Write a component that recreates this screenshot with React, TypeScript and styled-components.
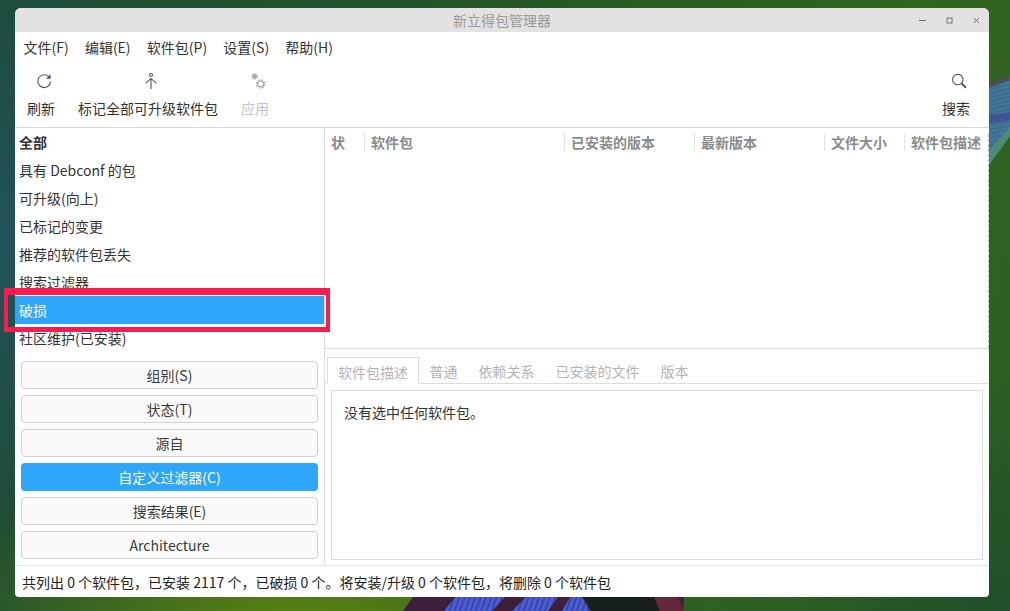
import React from 'react';
import styled, { createGlobalStyle } from 'styled-components';

const FONT = `"Noto Sans CJK SC", "Noto Sans", sans-serif`;

const menus = ['文件(F)', '编辑(E)', '软件包(P)', '设置(S)', '帮助(H)'];
const filters = ['全部', '具有 Debconf 的包', '可升级(向上)', '已标记的变更', '推荐的软件包丢失', '搜索过滤器', '破损', '社区维护(已安装)'];
const groups = ['组别(S)', '状态(T)', '源自', '自定义过滤器(C)', '搜索结果(E)', 'Architecture'];
const columns = [
  { label: '状', width: 40 },
  { label: '软件包', width: 200 },
  { label: '已安装的版本', width: 130 },
  { label: '最新版本', width: 130 },
  { label: '文件大小', width: 80 },
  { label: '软件包描述', width: 84 }
];
const tabs = ['软件包描述', '普通', '依赖关系', '已安装的文件', '版本'];

const GlobalStyle = createGlobalStyle`
  html, body {
    margin: 0;
    width: 1010px;
    height: 611px;
    overflow: hidden;
  }
  * {
    box-sizing: border-box;
  }
`;

const Desktop = styled.div`
  position: relative;
  width: 1010px;
  height: 611px;
  padding: 8px 21px 14px 15px;
  font-family: ${FONT};
  font-size: 14px;
  color: #2e2e2e;
  background:
    radial-gradient(ellipse 240px 300px at 0px 240px, #23525c 0%, rgba(35, 82, 92, 0) 100%),
    radial-gradient(ellipse 380px 200px at 300px 640px, #5d8610 0%, rgba(93, 134, 16, 0) 100%),
    radial-gradient(ellipse 300px 260px at 1010px 611px, #224e2a 0%, rgba(34, 78, 42, 0) 100%),
    linear-gradient(100deg, #1c4a35 0%, #2b5a22 60%, #33651f 82%, #2d5e22 100%);
`;

const Wallpaper = styled.svg`
  position: absolute;
  left: 0;
  top: 0;
`;

const Window = styled.div`
  position: relative;
  display: flex;
  flex-direction: column;
  height: 589px;
  background: #fff;
  border-radius: 6px 6px 4px 4px;
  overflow: hidden;
`;

const TitleBar = styled.div`
  display: grid;
  grid-template-columns: 1fr auto 1fr;
  align-items: center;
  height: 24px;
  flex: none;
  background: #e2e2e2;
  color: #9a9a9a;
`;

const Title = styled.div`
  grid-column: 2;
  line-height: 24px;
`;

const WindowControls = styled.div`
  justify-self: end;
  display: flex;
  align-items: center;
  gap: 20px;
  padding-right: 9px;
  height: 24px;
`;

const MenuBar = styled.div`
  display: flex;
  gap: 16.2px;
  height: 32px;
  flex: none;
  padding: 0 0 2px 8.5px;
  align-items: center;
  color: #333;
`;

const ToolBar = styled.div`
  display: flex;
  gap: 23px;
  height: 64px;
  flex: none;
  padding: 0 19px 0 12px;
  border-bottom: 1px solid #d9d9dd;
`;

const ToolButton = styled.div<{ $disabled?: boolean; $end?: boolean }>`
  display: flex;
  flex-direction: column;
  align-items: center;
  margin-left: ${(p) => (p.$end ? 'auto' : '0')};
  color: ${(p) => (p.$disabled ? '#c4c4c8' : '#333')};
  svg {
    display: block;
    margin: 9px 0 0 5px;
  }
`;

const ToolLabel = styled.span`
  margin-top: 9px;
  line-height: 20px;
`;

const Body = styled.div`
  display: flex;
  height: 437px;
  flex: none;
`;

const Sidebar = styled.div`
  width: 310px;
  flex: none;
  border-right: 1px solid #dcdce0;
  display: flex;
  flex-direction: column;
`;

const FilterList = styled.div`
  height: 233px;
  flex: none;
`;

const FilterRow = styled.div<{ $selected?: boolean; $bold?: boolean }>`
  height: 28px;
  line-height: 28px;
  padding-left: 4px;
  font-weight: ${(p) => (p.$bold ? 700 : 400)};
  background: ${(p) => (p.$selected ? '#2ea6fa' : 'transparent')};
  color: ${(p) => (p.$selected ? '#fff' : '#333')};
`;

const ButtonStack = styled.div`
  display: flex;
  flex-direction: column;
  gap: 6px;
  padding: 0 6px;
`;

const GroupButton = styled.div<{ $active?: boolean }>`
  height: 28px;
  text-align: center;
  border-radius: 4px;
  border: ${(p) => (p.$active ? 'none' : '1px solid #d0d0d0')};
  line-height: ${(p) => (p.$active ? '28px' : '26px')};
  background: ${(p) => (p.$active ? '#2ea6fa' : '#fafafa')};
  color: ${(p) => (p.$active ? '#fff' : '#3a3a3a')};
`;

const Main = styled.div`
  flex: 1;
  min-width: 0;
  display: flex;
  flex-direction: column;
`;

const PackageList = styled.div`
  position: relative;
  height: 221px;
  flex: none;
  border-bottom: 1px solid #dcdce0;
`;

const ColumnHeader = styled.div`
  display: flex;
  height: 30px;
  padding-top: 5px;
`;

const ColumnCell = styled.div<{ $width: number }>`
  width: ${(p) => p.$width}px;
  flex: none;
  height: 18px;
  line-height: 18px;
  padding-left: 6px;
  font-weight: 700;
  color: #8b8b8b;
  white-space: nowrap;
  border-right: 1px solid #e2e2e2;
  &:last-child {
    border-right: none;
  }
`;

const DashedEdge = styled.div`
  position: absolute;
  right: 0;
  top: 6px;
  bottom: 0;
  border-right: 1px dashed #bdbdbd;
`;

const DetailPane = styled.div`
  flex: 1;
  display: flex;
  flex-direction: column;
  padding-top: 8px;
`;

const TabStrip = styled.div`
  display: flex;
  height: 27px;
  flex: none;
  padding-left: 2px;
  border-bottom: 1px solid #dcdce0;
`;

const Tab = styled.div<{ $active?: boolean }>`
  height: ${(p) => (p.$active ? '27px' : '26px')};
  padding: 0 ${(p) => (p.$active ? '10px' : '10.5px')};
  color: #b4b4b8;
  background: #fff;
  border: ${(p) => (p.$active ? '1px solid #dcdce0' : 'none')};
  border-bottom: ${(p) => (p.$active ? '1px solid #fff' : 'none')};
  line-height: ${(p) => (p.$active ? '28px' : '29px')};
`;

const TabPanel = styled.div`
  height: 170px;
  margin: 6px 6px 0;
  padding: 10px 12px;
  border: 1px solid #dcdce0;
  line-height: 22px;
  color: #333;
`;

const StatusBar = styled.div`
  height: 32px;
  flex: none;
  border-top: 1px solid #e2e2e2;
  padding-left: 7px;
  line-height: 32px;
  color: #222;
  white-space: nowrap;
`;

const Highlight = styled.div`
  position: absolute;
  left: 4px;
  top: 288px;
  width: 326px;
  height: 44px;
  border: solid #fb1c4f;
  border-width: 7px 4px 5px 4px;
  pointer-events: none;
`;

const RefreshIcon = () => (
  <svg width="16" height="16" viewBox="0 0 16 16" fill="none" stroke="#4d5566" strokeWidth="1.1">
    <path d="M13.4 4.4A6.4 6.4 0 1 0 14.6 8.6" />
    <path d="M14.6 1.2v4.6H10z" fill="#4d5566" stroke="none" />
  </svg>
);

const MarkIcon = () => (
  <svg width="16" height="16" viewBox="0 0 16 16" fill="none" stroke="#4d5566" strokeWidth="1.1">
    <circle cx="8" cy="2" r="1.5" />
    <path d="M8 5.4V16M2.6 10.4L8 5.4l5.4 5" />
  </svg>
);

const ApplyIcon = () => (
  <svg width="16" height="16" viewBox="0 0 16 16" fill="none" stroke="#a4a7ad">
    <circle cx="4.6" cy="3.4" r="2.4" fill="#a4a7ad" stroke="none" />
    <circle cx="4.6" cy="3.4" r="2.9" strokeWidth="1" strokeDasharray="1.3 1" />
    <circle cx="10.6" cy="11" r="3" strokeWidth="1.2" />
    <circle cx="10.6" cy="11" r="4.2" strokeWidth="1.2" strokeDasharray="1.7 1.6" />
  </svg>
);

const SearchIcon = () => (
  <svg width="16" height="16" viewBox="0 0 16 16" fill="none" stroke="#4d5566" strokeWidth="1.1">
    <circle cx="6.8" cy="6.6" r="5.2" />
    <path d="M10.6 10.4l4.4 4.4" strokeWidth="2" />
  </svg>
);

const MinIcon = () => (
  <svg width="7" height="7" viewBox="0 0 7 7"><path d="M0 3.5h7" stroke="#6e6e6e" strokeWidth="1" fill="none" /></svg>
);
const MaxIcon = () => (
  <svg width="7" height="7" viewBox="0 0 7 7"><rect x="1" y="1" width="5" height="5" stroke="#6e6e6e" strokeWidth="1" fill="none" /></svg>
);
const CloseIcon = () => (
  <svg width="7" height="7" viewBox="0 0 7 7"><path d="M1 1l5 5M6 1L1 6" stroke="#6e6e6e" strokeWidth="1" fill="none" /></svg>
);

const WallpaperArt = () => (
  <Wallpaper width="1010" height="611" viewBox="0 0 1010 611">
    <defs>
      <pattern id="blueStripes" width="5" height="5" patternUnits="userSpaceOnUse" patternTransform="rotate(20)">
        <rect width="5" height="5" fill="#4a5fd0" />
        <rect width="2" height="5" fill="#3a44b0" />
      </pattern>
      <pattern id="tealStripes" width="4" height="4" patternUnits="userSpaceOnUse" patternTransform="rotate(-12)">
        <rect width="4" height="4" fill="#44789a" />
        <rect width="4" height="1.5" fill="#3b6a88" />
      </pattern>
    </defs>
    <path d="M403 611L413 597H684L683 611z" fill="#3c1f3a" />
    <path d="M444 611L455 597H505L492 611z" fill="url(#blueStripes)" />
    <path d="M512 611L526 597H558L548 611z" fill="url(#blueStripes)" />
    <path d="M562 611L570 597H582L590 611z" fill="url(#blueStripes)" />
    <path d="M583 597H654L660 611H592z" fill="#17201f" />
    <path d="M654 597H678L684 611H660z" fill="#63283a" />
    <path d="M989 85L1010 76V136L989 165z" fill="url(#tealStripes)" />
    <path d="M989 84L1010 75V80L989 88z" fill="#4a4f58" />
    <path d="M989 115L1010 112V120L989 124z" fill="#3d5590" />
    <path d="M989 150L1010 127V136L989 165z" fill="#4d8a78" />
  </Wallpaper>
);

export default function App() {
  return (
    <>
      <GlobalStyle />
      <Desktop>
        <WallpaperArt />
        <Window>
          <TitleBar>
            <Title>新立得包管理器</Title>
            <WindowControls>
              <MinIcon />
              <MaxIcon />
              <CloseIcon />
            </WindowControls>
          </TitleBar>
          <MenuBar>
            {menus.map((m) => (
              <span key={m}>{m}</span>
            ))}
          </MenuBar>
          <ToolBar>
            <ToolButton>
              <RefreshIcon />
              <ToolLabel>刷新</ToolLabel>
            </ToolButton>
            <ToolButton>
              <MarkIcon />
              <ToolLabel>标记全部可升级软件包</ToolLabel>
            </ToolButton>
            <ToolButton $disabled>
              <ApplyIcon />
              <ToolLabel>应用</ToolLabel>
            </ToolButton>
            <ToolButton $end>
              <SearchIcon />
              <ToolLabel>搜索</ToolLabel>
            </ToolButton>
          </ToolBar>
          <Body>
            <Sidebar>
              <FilterList>
                {filters.map((f, i) => (
                  <FilterRow key={f} $bold={i === 0} $selected={f === '破损'}>
                    {f}
                  </FilterRow>
                ))}
              </FilterList>
              <ButtonStack>
                {groups.map((g) => (
                  <GroupButton key={g} $active={g === '自定义过滤器(C)'}>
                    {g}
                  </GroupButton>
                ))}
              </ButtonStack>
            </Sidebar>
            <Main>
              <PackageList>
                <ColumnHeader>
                  {columns.map((c) => (
                    <ColumnCell key={c.label} $width={c.width}>
                      {c.label}
                    </ColumnCell>
                  ))}
                </ColumnHeader>
                <DashedEdge />
              </PackageList>
              <DetailPane>
                <TabStrip>
                  {tabs.map((t, i) => (
                    <Tab key={t} $active={i === 0}>
                      {t}
                    </Tab>
                  ))}
                </TabStrip>
                <TabPanel>没有选中任何软件包。</TabPanel>
              </DetailPane>
            </Main>
          </Body>
          <StatusBar>共列出 0 个软件包，已安装 2117 个，已破损 0 个。将安装/升级 0 个软件包，将删除 0 个软件包</StatusBar>
        </Window>
        <Highlight />
      </Desktop>
    </>
  );
}
